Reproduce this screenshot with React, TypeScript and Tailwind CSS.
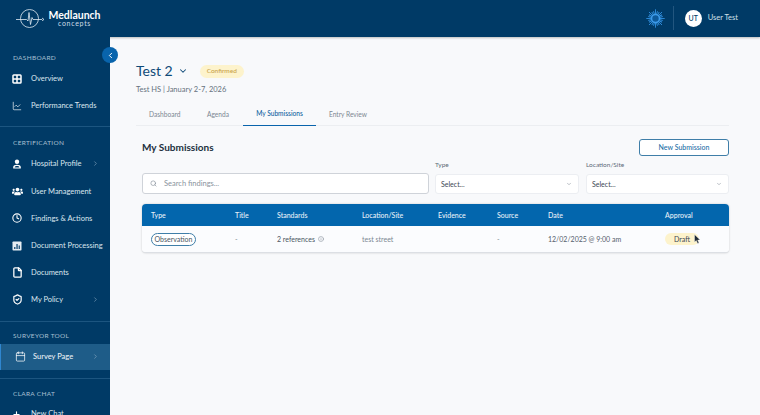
import { ChevronDown, ChevronLeft, ChevronRight, Search, ChartLine, Clock, File, ShieldCheck, Calendar, Plus, Info } from "lucide-react";
import { FaUsers } from "react-icons/fa";
import React from "react";

const font = { fontFamily: '"Lato", "Noto Sans", sans-serif' };

function Label({ children }: { children: React.ReactNode }) {
  return <div className="h-[14px] pl-[13px] text-[6.5px] leading-[14px] tracking-[0.3px] text-[#a9c0d2]">{children}</div>;
}

function Item({ icon, label, arrow }: { icon: React.ReactNode; label: string; arrow?: boolean }) {
  return (
    <div className="flex h-[27.2px] items-center pl-[12px] pr-[10px] text-white">
      <span className="flex w-[19px] shrink-0">{icon}</span>
      <span className="whitespace-nowrap text-[7.5px] text-[#dbe6ee]">{label}</span>
      {arrow && <ChevronRight className="ml-auto mr-[1px] size-[7px] text-[#8fadc4]" />}
    </div>
  );
}

function Divider() {
  return <div className="h-px bg-[#1c5580]" />;
}

function Logo() {
  return (
    <svg width="32" height="22" viewBox="0 0 32 22" className="shrink-0 text-[#dfeaf2]" fill="none" stroke="currentColor" strokeWidth="0.8">
      <circle cx="13.5" cy="10.5" r="9" />
      <path d="M0 11.5 H10.5 L12 13 L13 4.5 L14.5 16.5 L16 9.5 L17 11.5 H26" />
      <path d="M26 10 L28 11.5 L26 12.7" />
    </svg>
  );
}

function Sun() {
  const rays = Array.from({ length: 24 }, (_, i) => (i * 360) / 24);
  return (
    <svg width="19" height="19" viewBox="0 0 19 19">
      {rays.map((r, i) => (
        <line key={r} x1="9.5" y1="5" x2="9.5" y2={i % 3 === 0 ? "0.3" : "2"} stroke="#2f8fe0" strokeWidth="0.9" transform={`rotate(${r} 9.5 9.5)`} />
      ))}
      <circle cx="9.5" cy="9.5" r="4" fill="#0d5a9b" stroke="#3d9bea" strokeWidth="1.6" />
    </svg>
  );
}

function GridIcon() {
  return (
    <svg width="10" height="10" viewBox="0 0 10 10" fill="none" stroke="currentColor" strokeWidth="1.5">
      <rect x="1" y="1" width="8" height="8" rx="0.8" />
      <path d="M5 1 V9 M1 5 H9" />
    </svg>
  );
}

function PersonIcon() {
  return (
    <svg width="10" height="10" viewBox="0 0 10 10" fill="currentColor">
      <path d="M5 0.5 a2.2 2.2 0 1 1 0 4.4 a2.2 2.2 0 1 1 0 -4.4 Z" />
      <path d="M1.2 9.5 V8 C1.2 6.5 3 5.8 5 5.8 C7 5.8 8.8 6.5 8.8 8 V9.5 Z M2.6 8.4 H7.4 C7.2 7.5 6.2 7.1 5 7.1 C3.8 7.1 2.8 7.5 2.6 8.4 Z" fillRule="evenodd" />
    </svg>
  );
}

function DocChartIcon() {
  return (
    <svg width="10" height="10" viewBox="0 0 10 10">
      <rect x="0.5" y="0.5" width="9" height="9" rx="0.8" fill="#e6edf3" />
      <path d="M2 8 V6 H3.5 V8 Z M4.3 8 V3 H5.8 V8 Z M6.6 8 V4.5 H8 V8 Z" fill="#2d5d83" />
    </svg>
  );
}

function Select({ label, className }: { label: string; className: string }) {
  return (
    <div className={`flex flex-col ${className}`}>
      <div className="mb-[5px] text-[6.5px] leading-[8px] text-[#5e6b78]">{label}</div>
      <div className="flex h-[20px] items-center justify-between rounded-[3px] border border-[#eceef2] bg-white pl-[5px] pr-[6px] text-[7px] text-[#3c4653]">
        Select...
        <ChevronDown className="size-[6px] text-[#7a8490]" />
      </div>
    </div>
  );
}

const cols = ["w-[84px]", "w-[42px]", "w-[85px]", "w-[76px]", "w-[59px]", "w-[51px]", "w-[117px]", "w-[64px]"];
const heads = ["Type", "Title", "Standards", "Location/Site", "Evidence", "Source", "Date", "Approval"];

export default function App() {
  return (
    <div className="flex h-[415px] w-[760px] flex-col overflow-hidden bg-[#f8f9fb]" style={font}>
      <header className="flex h-[37px] shrink-0 items-center bg-[#003a66] shadow-[0_1px_2px_rgba(0,0,0,0.25)]">
        <div className="ml-[16px]"><Logo /></div>
        <div className="flex w-[53px] flex-col items-center text-white">
          <div className="text-[10.5px] font-bold leading-[10px]">Medlaunch</div>
          <div className="text-[7px] leading-[7px] tracking-[0.7px] text-[#cfdde8]">concepts</div>
        </div>
        <div className="ml-auto mt-[-1px] flex items-center">
          <Sun />
          <div className="ml-[8px] mr-[11px] h-[24px] w-px bg-[#22567f]" />
          <div className="flex size-[17px] items-center justify-center rounded-full bg-white text-[7px] font-medium text-[#003a66]">UT</div>
          <span className="ml-[6px] mr-[22px] whitespace-nowrap text-[7.5px] text-[#d3e0ea]">User Test</span>
        </div>
      </header>
      <div className="flex min-h-0 flex-1">
        <aside className="relative w-[110px] shrink-0 bg-[#003a66] pt-[14px]">
          <button className="absolute left-[102px] top-[10px] flex size-[16px] items-center justify-center rounded-full bg-[#0964ac] text-white">
            <ChevronLeft className="size-[9px]" strokeWidth={2.5} />
          </button>
          <Label>DASHBOARD</Label>
          <Item icon={<GridIcon />} label="Overview" />
          <Item icon={<ChartLine className="size-[10px]" strokeWidth={1.6} />} label="Performance Trends" />
          <div className="mt-[7px]" />
          <Divider />
          <div className="mt-[9px]" />
          <Label>CERTIFICATION</Label>
          <Item icon={<PersonIcon />} label="Hospital Profile" arrow />
          <Item icon={<FaUsers className="size-[11px]" />} label="User Management" />
          <Item icon={<Clock className="size-[10px]" strokeWidth={2.6} />} label="Findings & Actions" />
          <Item icon={<DocChartIcon />} label="Document Processing" />
          <Item icon={<File className="size-[11px]" strokeWidth={2.8} />} label="Documents" />
          <Item icon={<ShieldCheck className="size-[11px]" strokeWidth={2.6} />} label="My Policy" arrow />
          <div className="mt-[7px]" />
          <Divider />
          <div className="mt-[7px]" />
          <Label>SURVEYOR TOOL</Label>
          <div className="mt-[1px] flex h-[26px] items-center border-l border-[#2f86cf] bg-[#1e5c88] pl-[14px] pr-[10px]">
            <Calendar className="mr-[7px] size-[11px] text-white" strokeWidth={1.6} />
            <span className="text-[7.5px] font-medium text-[#e6eef4]">Survey Page</span>
            <ChevronRight className="ml-auto mr-[1px] size-[7px] text-[#8fadc4]" />
          </div>
          <div className="mt-[8px]" />
          <Divider />
          <div className="mt-[8px]" />
          <Label>CLARA CHAT</Label>
          <Item icon={<Plus className="size-[9px]" strokeWidth={3} />} label="New Chat" />
        </aside>
        <main className="min-w-0 flex-1 pl-[26px] pr-[31px] pt-[25px]">
          <div className="flex h-[18px] items-center">
            <span className="text-[14px] leading-[18px] text-[#0f4a78]">Test 2</span>
            <ChevronDown className="ml-[5px] size-[10px] text-[#0f4a78]" strokeWidth={2.5} />
            <span className="ml-[12px] flex h-[13px] w-[44px] items-center justify-center rounded-full bg-[#fdf3cc] text-[6.5px] font-medium text-[#c9a24a]">Confirmed</span>
          </div>
          <div className="mt-[5px] text-[7.5px] leading-[10px] text-[#66717d]">Test HS | January 2-7, 2026</div>
          <nav className="mt-[9px] flex h-[22px] items-center border-b border-[#eceef1] text-[6.6px] text-[#7c8792]">
            <span className="w-[45px] whitespace-nowrap pl-[13px]">Dashboard</span>
            <span className="ml-[26px] w-[36px]">Agenda</span>
            <span className="flex h-[22px] w-[73px] items-center justify-center border-b border-[#0964ac] font-medium text-[#0f5f9e]">My Submissions</span>
            <span className="ml-[13px]">Entry Review</span>
          </nav>
          <div className="pl-[6px]">
            <div className="mt-[12px] flex h-[18px] items-center justify-between">
              <h2 className="text-[10px] font-bold text-[#22303d]">My Submissions</h2>
              <button className="flex h-[17px] w-[90px] items-center justify-center rounded-[3px] border border-[#3f7ea8] bg-white text-[7px] font-medium text-[#1c6ea6]">New Submission</button>
            </div>
            <div className="mt-[5px] flex items-end">
              <div className="flex h-[21px] w-[287px] items-center rounded-[3px] border border-[#cfd3d9] bg-white pl-[7px]">
                <Search className="size-[7px] text-[#7a8490]" />
                <span className="ml-[7px] text-[7.5px] text-[#8a939d]">Search findings...</span>
              </div>
              <Select label="Type" className="ml-[6px] w-[144px]" />
              <Select label="Location/Site" className="ml-[7px] w-[143px]" />
            </div>
            <div className="mt-[10px] w-[587px] overflow-hidden rounded-[4px] border-b border-[#dcdfe4] bg-white shadow-[0_0_2px_rgba(0,0,0,0.22)]">
              <div className="flex h-[22px] items-center bg-[#0366ad] pl-[9px] text-[7px] font-medium text-[#e8f1f8]">
                {heads.map((h, i) => (
                  <div key={h} className={cols[i]}>{h}</div>
                ))}
              </div>
              <div className="flex h-[26px] items-center bg-[#fbfcfe] pl-[9px] text-[7px] text-[#4a5561]">
                <div className={cols[0]}>
                  <span className="inline-flex h-[13px] w-[45px] items-center justify-center rounded-full border border-[#3f7ea8] bg-white text-[#4a5561]">Observation</span>
                </div>
                <div className={`${cols[1]} text-[#7c8792]`}>-</div>
                <div className={`${cols[2]} flex items-center`}>
                  2 references
                  <Info className="ml-[3px] size-[6px] text-[#7c8792]" />
                </div>
                <div className={`${cols[3]} text-[#7c8792]`}>test street</div>
                <div className={cols[4]} />
                <div className={`${cols[5]} text-[#7c8792]`}>-</div>
                <div className={`${cols[6]} text-[#55606c]`}>12/02/2025 @ 9:00 am</div>
                <div className={cols[7]}>
                  <span className="relative inline-flex h-[12px] w-[34px] items-center justify-center rounded-full bg-[#fdf3cc] text-[#3c4653]">
                    Draft
                    <svg width="7" height="10" viewBox="0 0 7 10" className="absolute left-[29px] top-[1px]">
                      <path d="M0.5 0.5 V8 L2.3 6.5 L3.6 9.5 L5 8.9 L3.7 6 H6.2 Z" fill="#1f2a35" stroke="#fff" strokeWidth="0.4" />
                    </svg>
                  </span>
                </div>
              </div>
            </div>
          </div>
        </main>
      </div>
    </div>
  );
}
